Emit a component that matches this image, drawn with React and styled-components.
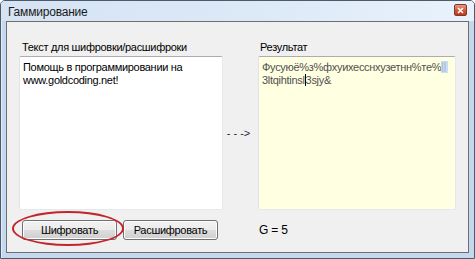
import React from "react";
import styled, { createGlobalStyle } from "styled-components";

const GlobalStyle = createGlobalStyle`
  html, body {
    margin: 0;
    padding: 0;
    background: #ffffff;
  }
  * {
    box-sizing: border-box;
  }
`;

const Window = styled.div`
  width: 475px;
  height: 259px;
  border: 1px solid #4d5a6b;
  border-radius: 5px 5px 0 0;
  background: #c4d9f0;
  box-shadow: inset 1px 1px 0 #e4eefa;
  padding: 0 5px 5px 5px;
  display: flex;
  flex-direction: column;
  font-family: "Liberation Sans", Arial, sans-serif;
`;

const TitleBar = styled.div`
  height: 21px;
  margin: 0 -5px;
  padding: 0 7px 0 7px;
  display: flex;
  align-items: center;
  justify-content: space-between;
  background: linear-gradient(to right, #d5e3f3 0%, #dce9f7 55%, #e9f2fc 100%);
  border-radius: 4px 4px 0 0;
`;

const Title = styled.span`
  font-family: "Liberation Sans", Arial, sans-serif;
  font-size: 12px;
  letter-spacing: -0.2px;
  color: #1a1a1a;
  padding-top: 2px;
`;

const CloseButton = styled.div`
  width: 13px;
  height: 12px;
  margin-top: -2px;
  border: 1px solid #7a3a30;
  border-radius: 2px;
  background: linear-gradient(#e49a86 0%, #d45a3c 50%, #c2371c 100%);
  display: flex;
  align-items: center;
  justify-content: center;
`;

const Client = styled.div`
  flex: 1;
  background: #f0f0f0;
  border: 1px solid #6e6e6e;
  padding: 18px 12px 12px 12px;
  display: grid;
  grid-template-columns: 204px 1fr 198px;
  grid-template-rows: auto 154px 1fr;
  font-size: 11px;
  letter-spacing: -0.3px;
`;

const Label = styled.div`
  line-height: 14px;
  color: #000;
  padding-left: ${(p) => p.$indent || 3}px;
  margin-bottom: 2px;
`;

const TextBox = styled.div`
  border: 1px solid #abadb3;
  border-color: #abadb3 #e3e9ef #e3e9ef #e2e3ea;
  border-radius: 2px;
  background: ${(p) => (p.$result ? "#ffffe1" : "#ffffff")};
  padding: 4px 3px;
  line-height: 13px;
  color: ${(p) => (p.$result ? "#505050" : "#000")};
  word-break: break-word;
`;

const Middle = styled.div`
  display: flex;
  align-items: center;
  justify-content: center;
  color: #1c2a44;
  letter-spacing: 0;
  padding-right: 4px;
`;

const Selected = styled.span`
  display: inline-block;
  background: #c9def5;
  color: #9fb3c8;
  width: 7px;
  height: 12px;
  vertical-align: -2px;
  letter-spacing: 0;
  font-size: 10px;
  line-height: 12px;
  overflow: hidden;
`;

const Caret = styled.span`
  display: inline-block;
  width: 1px;
  height: 12px;
  background: #000;
  vertical-align: -2px;
`;

const ButtonRow = styled.div`
  position: relative;
  display: flex;
  gap: 6px;
  padding: 10px 0 0 3px;
`;

const Button = styled.button`
  width: 95px;
  height: 20px;
  padding: 0;
  border: 1px solid #707070;
  border-radius: 3px;
  background: linear-gradient(#f2f2f2 0%, #ebebeb 50%, #dddddd 51%, #cfcfcf 100%);
  box-shadow: inset 0 0 0 1px #fcfcfc;
  font-family: "Liberation Sans", Arial, sans-serif;
  font-size: 11px;
  letter-spacing: -0.3px;
  color: #000;
`;

const Highlight = styled.div`
  position: absolute;
  left: -7px;
  top: 1px;
  width: 112px;
  height: 35px;
  border: 2px solid #c1262c;
  border-radius: 50%;
  pointer-events: none;
`;

const Info = styled.div`
  grid-column: 3;
  padding: 10px 0 0 1px;
  display: flex;
  align-items: center;
  height: 30px;
  font-size: 12px;
  letter-spacing: -0.2px;
  color: #000;
`;

export default function App() {
  return (
    <>
      <GlobalStyle />
      <Window>
        <TitleBar>
          <Title>Гаммирование</Title>
          <CloseButton>
            <svg width="7" height="7" viewBox="0 0 7 7">
              <path d="M1 1 L6 6 M6 1 L1 6" stroke="#ffffff" strokeWidth="1.6" />
            </svg>
          </CloseButton>
        </TitleBar>
        <Client>
          <Label>Текст для шифровки/расшифроки</Label>
          <div />
          <Label $indent={2}>Результат</Label>

          <TextBox>
            Помощь в программировании на www.goldcoding.net!
          </TextBox>
          <Middle>- - -&gt;</Middle>
          <TextBox $result>
            Фусуюё%з%фхуихесснхузетнн%те%<Selected>||</Selected>
            <br />
            3ltqihtinsl<Caret />3sjy&amp;
          </TextBox>

          <ButtonRow>
            <Highlight />
            <Button>Шифровать</Button>
            <Button>Расшифровать</Button>
          </ButtonRow>
          <Info>G = 5</Info>
        </Client>
      </Window>
    </>
  );
}
